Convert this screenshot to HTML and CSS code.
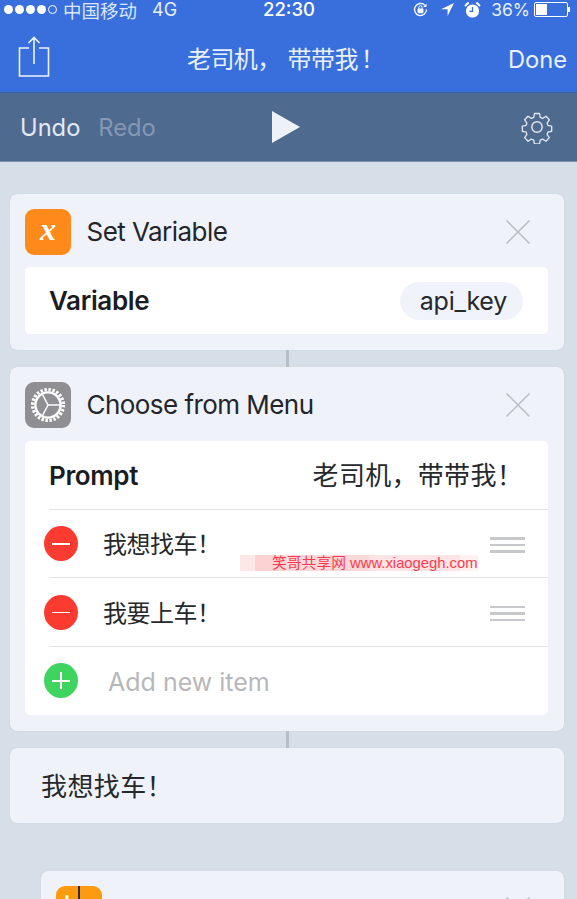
FILE: index.html
```html
<!DOCTYPE html>
<html lang="zh">
<head>
<meta charset="utf-8">
<title>老司机，带带我！</title>
<link rel="stylesheet" href="styles.css">
</head>
<body>
<div class="screen">
  <header class="top">
    <div class="status">
      <div class="status-left">
        <span class="dots"><i></i><i></i><i></i><i></i><i class="empty"></i></span>
        <span class="carrier">中国移动</span>
        <span class="net">4G</span>
      </div>
      <div class="clock">22:30</div>
      <div class="status-right">
        <svg class="st-lock" width="17" height="17" viewBox="0 0 17 17"><path d="M14.500 8.500a6 6 0 1 1-1.600-4.100" fill="none" stroke="#fff" stroke-width="1.300"/><path d="M14.500 2.500v3.400h-3.200z" fill="#fff"/><rect x="5.600" y="7.600" width="5.800" height="4.600" rx=".8" fill="#fff"/><path d="M6.800 7.800V6.400a1.700 1.700 0 0 1 3.400 0v1.400" fill="none" stroke="#fff" stroke-width="1"/></svg>
        <svg class="st-loc" width="15" height="15" viewBox="0 0 15 15"><path d="M14 1 1 7.200h6.600V14z" fill="#fff"/></svg>
        <svg class="st-alarm" width="17" height="18" viewBox="0 0 17 18"><circle cx="8.500" cy="10" r="6.600" fill="#fff"/><path d="M8.500 6v4.400H5.400" fill="none" stroke="#386fdc" stroke-width="1.300"/><path d="M1 5 4.600 1.600M16 5l-3.600-3.400" stroke="#fff" stroke-width="2"/></svg>
        <span class="pct">36%</span>
        <span class="battery"><span class="battery-fill"></span></span><span class="battery-tip"></span>
      </div>
    </div>
    <div class="nav">
      <svg class="share" width="32" height="42" viewBox="0 0 32 42"><path d="M11 12H1.500v28h29V12H21" fill="none" stroke="#eef3fb" stroke-width="1.600"/><path d="M16 28V2M10.500 7 16 1.500 21.500 7" fill="none" stroke="#eef3fb" stroke-width="1.600"/></svg>
      <div class="title">老司机<span class="comma">，</span>带带我<span class="bang">！</span></div>
      <div class="done">Done</div>
    </div>
  </header>

  <div class="toolbar">
    <div class="history">
      <span class="undo">Undo</span>
      <span class="redo">Redo</span>
    </div>
    <svg class="play" width="30" height="34" viewBox="0 0 30 34"><path d="M1 1 29 17 1 33z" fill="#eef2f8"/></svg>
    <svg class="gear" width="32" height="34" viewBox="0 0 32 34"><path d="M13.200 2h5.600l.8 4.300 2.700 1.100 3.700-2.400 3.700 4-2.500 3.600.9 2.600 4.200.9v5.600l-4.200.9-.9 2.600 2.500 3.600-3.700 4-3.700-2.400-2.700 1.100-.8 4.300h-5.600l-.8-4.300-2.700-1.100-3.700 2.400-3.700-4 2.500-3.600-.9-2.600-4.200-.9v-5.600l4.200-.9.900-2.600-2.500-3.600 3.700-4 3.700 2.400 2.700-1.100z" transform="translate(1.600 1.700) scale(.9)" fill="none" stroke="#dfe6f0" stroke-width="1.500" stroke-linejoin="round"/><circle cx="16" cy="17" r="5.200" fill="none" stroke="#dfe6f0" stroke-width="1.500"/></svg>
  </div>

  <main class="flow">
    <section class="card">
      <div class="card-head">
        <div class="app-icon orange"><span class="var-x">x</span></div>
        <div class="card-title">Set Variable</div>
        <svg class="close" width="26" height="26" viewBox="0 0 26 26"><path d="M1.500 1.500l23 23M24.500 1.500l-23 23" stroke="#b9bcc2" stroke-width="1.500"/></svg>
      </div>
      <div class="panel">
        <div class="row field short">
          <span class="label">Variable</span>
          <span class="pill">api_key</span>
        </div>
      </div>
    </section>

    <div class="link"></div>

    <section class="card">
      <div class="card-head tall">
        <div class="app-icon grey">
          <svg width="38" height="38" viewBox="0 0 38 38"><circle cx="19" cy="19" r="15.400" fill="none" stroke="#fff" stroke-width="3.400" stroke-dasharray="2.400 1.630"/><circle cx="19" cy="19" r="12.600" fill="none" stroke="#fff" stroke-width="2.400"/><path d="M19 19 13.500 8.500M19 19H31M19 19 13.500 29.500" stroke="#fff" stroke-width="1.500"/></svg>
        </div>
        <div class="card-title">Choose from Menu</div>
        <svg class="close" width="26" height="26" viewBox="0 0 26 26"><path d="M1.500 1.500l23 23M24.500 1.500l-23 23" stroke="#b9bcc2" stroke-width="1.500"/></svg>
      </div>
      <div class="panel">
        <div class="row field line">
          <span class="label">Prompt</span>
          <span class="prompt">老司机，带带我！</span>
        </div>
        <div class="row item line">
          <span class="round red"><i class="minus"></i></span>
          <span class="item-text">我想找车！</span>
          <span class="grip"><i></i><i></i><i></i></span>
        </div>
        <div class="row item line">
          <span class="round red"><i class="minus"></i></span>
          <span class="item-text">我要上车！</span>
          <span class="grip"><i></i><i></i><i></i></span>
        </div>
        <div class="row item">
          <span class="round green"><i class="minus"></i><i class="plus-bar"></i></span>
          <span class="add-text">Add new item</span>
        </div>
      </div>
    </section>

    <div class="link"></div>

    <section class="card result">我想找车！</section>

    <section class="card nested">
      <div class="card-head">
        <div class="app-icon calc"><span class="calc-l">+</span><span class="calc-r">−</span></div>
        <div class="card-title">Count</div>
        <svg class="close" width="26" height="26" viewBox="0 0 26 26"><path d="M1.500 1.500l23 23M24.500 1.500l-23 23" stroke="#b9bcc2" stroke-width="1.500"/></svg>
      </div>
    </section>
  </main>

  <div class="watermark">笑哥共享网 www.xiaogegh.com</div>
</div>
</body>
</html>
```

FILE: styles.css
```css
* { box-sizing: border-box; }
html, body { margin: 0; padding: 0; }
body { font-family: Inter, "Noto Sans CJK SC", sans-serif; background: #d6dee8; }
.screen { position: relative; width: 577px; height: 899px; overflow: hidden; background: #d6dee8; }

.top { background: #386fdc; height: 93px; color: #f2f6fd; border-bottom: 1px solid #3a5f9e; }
.status { height: 22px; display: flex; align-items: center; position: relative; padding: 0 7px 3px 4px; justify-content: space-between; font-size: 18px; }
.status-left { display: flex; align-items: center; }
.dots { display: flex; gap: 2px; margin-right: 6px; }
.dots i { width: 9px; height: 9px; border-radius: 50%; background: #fff; }
.dots i.empty { background: none; border: 1px solid #fff; }
.carrier { font-size: 18.500px; color: #dbe6fa; width: 75px; white-space: nowrap; }
.net { margin-left: 14px; font-size: 18px; color: #e6eefc; }
.clock { position: absolute; left: 263px; top: 0; font-size: 18.500px; line-height: 19px; font-weight: 500; color: #fff; }
.status-right { display: flex; align-items: center; }
.st-lock { margin-right: 11px; margin-left: 1px; }
.st-loc { margin-right: 9px; }
.st-alarm { margin-right: 10px; }
.pct { font-size: 17.500px; margin-right: 4px; color: #e6eefc; }
.battery { width: 34px; height: 15px; border: 1px solid #fff; border-radius: 2px; padding: 1px; display: flex; }
.battery-fill { width: 11px; background: #fff; }
.battery-tip { width: 2px; height: 5px; background: #fff; }

.nav { height: 70px; display: flex; align-items: center; justify-content: space-between; padding: 0 10px 0 18px; position: relative; }
.title { position: absolute; left: 187px; top: 20px; font-size: 24px; line-height: 36px; color: #e9f0fc; white-space: nowrap; letter-spacing: -.6px; }
.comma { margin-right: 7px; }
.bang { margin-left: 3px; }
.done { font-size: 23.700px; color: #e9f0fc; margin-top: 5px; }

.toolbar { height: 69px; background: #4f6a8f; border-bottom: 1px solid #7d90a9; display: flex; align-items: center; padding: 0 24px 0 20px; position: relative; }
.history { display: flex; gap: 18px; font-size: 23.700px; }
.undo { color: #e3e9f2; }
.redo { color: #8498b3; }
.play { position: absolute; left: 271px; top: 17px; }
.gear { margin-left: auto; }

.flow { display: flex; flex-direction: column; padding: 32px 13px 0 10px; }
.card { background: #eff2f8; border-radius: 7px; box-shadow: 0 0 1px #b4bdcb; padding: 0 16px 16px 15px; }
.link { width: 3px; height: 17px; background: #b6bec9; margin-left: 276px; flex: none; }
.card-head { height: 73px; display: flex; align-items: center; padding-top: 2px; }
.card-head.tall { height: 74px; padding-top: 1px; }
.app-icon { width: 46px; height: 46px; border-radius: 9px; display: flex; align-items: center; justify-content: center; flex: none; }
.orange { background: #fd8a1b; }
.grey { background: #8e8e93; }
.var-x { font-family: "Liberation Serif", "DejaVu Serif", serif; font-style: italic; font-weight: 700; font-size: 32px; line-height: 32px; color: #fff; margin-top: -5px; }
.card-title { margin-left: 15.500px; font-size: 26px; letter-spacing: -.55px; color: #23252a; flex: 1; }
.close { margin-right: 17px; flex: none; }

.panel { background: #fff; border-radius: 5px; }
.row { display: flex; align-items: center; height: 68.500px; position: relative; }
.row.short { height: 67px; }
.field { padding: 0 25px 0 24px; justify-content: space-between; }
.line::after { content: ""; position: absolute; left: 24px; right: 0; bottom: 0; height: 1px; background: #e2e4e8; }
.label { font-size: 26px; font-weight: 600; letter-spacing: -.35px; color: #1b1c1f; }
.pill { background: #f0f3f9; border-radius: 19px; height: 38px; padding: 0 16px 0 20px; display: flex; align-items: center; font-size: 25px; letter-spacing: -.25px; color: #26282c; }
.prompt { font-size: 26px; color: #26282c; letter-spacing: .3px; margin-top: -4px; }
.item { padding: 0 23px 0 19px; }
.round { width: 34px; height: 35px; border-radius: 50%; position: relative; flex: none; }
.red { background: #fb3a30; }
.green { background: #3fd35f; }
.minus { position: absolute; left: 8px; right: 8px; top: 17px; height: 1.500px; background: #fff; }
.plus-bar { position: absolute; top: 9px; bottom: 9px; left: 16px; width: 1.500px; background: #fff; }
.item-text { margin-left: 25px; margin-top: -2px; font-size: 24px; letter-spacing: -.5px; color: #26282c; flex: 1; }
.grip { width: 35px; display: flex; flex-direction: column; gap: 4px; margin-top: 2px; }
.grip i { height: 2.500px; background: #c6c8cb; }
.add-text { margin-left: 30px; margin-top: 2px; font-size: 25px; color: #b7b8ba; }

.result { height: 75px; padding: 0 0 2px 31px; display: flex; align-items: center; font-size: 26px; letter-spacing: .4px; color: #26282c; }
.nested { margin-top: 48px; margin-left: 31px; height: 100px; flex: none; }
.calc { background: #fd9a0f; position: relative; overflow: hidden; display: flex; color: #fff; font-weight: 700; font-size: 22px; }
.calc-l, .calc-r { flex: 1; height: 100%; text-align: center; line-height: 26px; }
.calc-l { border-right: 2px solid #2c2c2c; }
.watermark { position: absolute; left: 240px; top: 555px; width: 238px; height: 16px; padding-left: 32px; background: linear-gradient(90deg, #ffe6e7 0 15px, #fdd2d3 15px 45px, #fdd9da 45px 130px, #ffe3e5 130px 220px, #fff0f1 220px); color: #fb3a50; font-size: 14.800px; line-height: 16px; white-space: nowrap; font-family: "Liberation Sans", "Noto Sans CJK SC", sans-serif; }
```
